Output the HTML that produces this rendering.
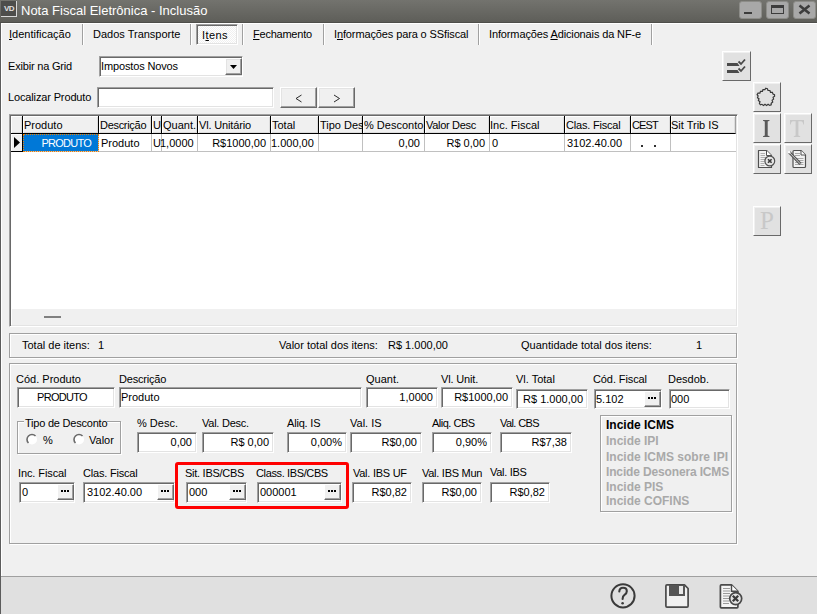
<!DOCTYPE html>
<html><head><meta charset="utf-8">
<style>
*{margin:0;padding:0;box-sizing:border-box}
html,body{width:817px;height:614px;overflow:hidden;background:#f0f0f0;font-family:"Liberation Sans",sans-serif;font-size:11px;color:#000}
.a{position:absolute}
.t{position:absolute;white-space:nowrap;line-height:13px}
.ed{position:absolute;background:#fff;border-top:1px solid #a0a0a0;border-left:1px solid #a0a0a0;border-right:1px solid #fff;border-bottom:1px solid #fff;box-shadow:inset 1px 1px 0 #696969,inset -1px -1px 0 #e3e3e3;white-space:nowrap;line-height:13px;padding:3px 4px 0 1px;overflow:hidden}
.r{text-align:right}
.btn{position:absolute;background:#f0f0f0;border-top:1px solid #fff;border-left:1px solid #fff;border-right:1px solid #696969;border-bottom:1px solid #696969;box-shadow:inset -1px -1px 0 #a0a0a0,inset 1px 1px 0 #e3e3e3}
.ell{position:absolute;background:#f0f0f0;border-top:1px solid #fff;border-left:1px solid #fff;border-right:1px solid #696969;border-bottom:1px solid #696969;box-shadow:inset -1px -1px 0 #a0a0a0}
.ell:after{content:"";position:absolute;left:3px;top:5px;width:2px;height:2px;background:#000;box-shadow:3px 0 #000,6px 0 #000}
.etch{position:absolute;border:1px solid #a0a0a0;box-shadow:inset 1px 1px 0 #fff,1px 1px 0 #fff}
.sep{position:absolute;top:24px;width:2px;height:21px;border-left:1px solid #a0a0a0;border-right:1px solid #fff}
.hd{position:absolute;top:116px;height:18px;background:#f0f0f0;border-right:1px solid #000;border-bottom:1px solid #000;box-shadow:inset 1px 1px 0 #fff,inset -1px -1px 0 #dcdcdc;white-space:nowrap;overflow:hidden;line-height:19px;padding-left:1px}
.cl{position:absolute;top:134px;height:18px;border-right:1px solid #c0c0c0;border-bottom:1px solid #c0c0c0;white-space:nowrap;overflow:hidden;line-height:19px;padding:0 2px}
.sb{position:absolute;background:#e1e1e1;border-top:1px solid #fff;border-left:1px solid #fff;border-right:1px solid #696969;border-bottom:1px solid #696969;box-shadow:inset 1px 1px 0 #f0f0f0}
.inc{position:absolute;left:606px;font-weight:bold;font-size:12px;color:#a9a9a9;white-space:nowrap;line-height:15px}
</style></head><body>
<!-- title bar -->
<div class="a" style="left:0;top:0;width:817px;height:23px;background:linear-gradient(#73736e,#5e5e59 95.6%,#4e4e4a 95.6%)"></div>
<div class="a" style="left:1px;top:1px;width:16px;height:16px;background:#4d4d4b;border-right:1px solid #d8d8d8;border-bottom:1px solid #d8d8d8"></div>
<div class="t" style="left:4px;top:2px;font-size:8px;font-weight:bold;color:#e0e0e0;letter-spacing:-0.6px">VD</div>
<div class="t" style="left:21px;top:3px;font-size:13px;line-height:15px;color:#fff">Nota Fiscal Eletrônica - Inclusão</div>
<div class="a" style="left:739px;top:1px;width:23px;height:18px;background:#a8a8a8;border:1px solid #8c8c88;border-radius:3px"></div>
<div class="a" style="left:744px;top:12px;width:8px;height:2px;background:#3c3c3c"></div>
<div class="a" style="left:766px;top:1px;width:23px;height:18px;background:#a8a8a8;border:1px solid #8c8c88;border-radius:3px"></div>
<div class="a" style="left:771px;top:5px;width:13px;height:9px;border:1px solid #3c3c3c;border-top-width:3px"></div>
<div class="a" style="left:793px;top:1px;width:23px;height:18px;background:#a8a8a8;border:1px solid #8c8c88;border-radius:3px"></div>
<svg class="a" style="left:798px;top:4px" width="13" height="11"><path d="M1.5 1.5L11.5 9.5M11.5 1.5L1.5 9.5" stroke="#3c3c3c" stroke-width="2.6"/></svg>
<!-- window border -->
<div class="a" style="left:0;top:23px;width:1px;height:591px;background:#5c5c5c"></div>
<div class="a" style="left:1px;top:23px;width:816px;height:1px;background:#fff"></div>
<div class="a" style="left:1px;top:23px;width:1px;height:553px;background:#fff"></div>

<!-- tabs -->
<div class="t" style="left:9px;top:28px"><u>I</u>dentificação</div>
<div class="sep" style="left:82px"></div>
<div class="t" style="left:93px;top:28px">Dados Transporte</div>
<div class="sep" style="left:190px"></div>
<div class="a" style="left:196px;top:24px;width:42px;height:21px;border-top:1px solid #a0a0a0;border-left:1px solid #a0a0a0;border-right:1px solid #fff;border-bottom:1px solid #fff;box-shadow:inset 1px 1px 0 #696969,inset -1px -1px 0 #e3e3e3;background:repeating-conic-gradient(#fff 0 25%,#f0f0f0 0 50%) 0 0/2px 2px"></div>
<div class="t" style="left:202px;top:29px;letter-spacing:0.4px">I<u>t</u>ens</div>
<div class="sep" style="left:242px"></div>
<div class="t" style="left:253px;top:28px;letter-spacing:-0.23px"><u>F</u>echamento</div>
<div class="sep" style="left:323px"></div>
<div class="t" style="left:334px;top:28px;letter-spacing:-0.12px">I<u>n</u>formações para o SSfiscal</div>
<div class="sep" style="left:478px"></div>
<div class="t" style="left:489px;top:28px;letter-spacing:-0.13px">Informações <u>A</u>dicionais da NF-e</div>
<div class="sep" style="left:651px"></div>

<!-- exibir / localizar -->
<div class="t" style="left:8px;top:60px;letter-spacing:-0.19px">Exibir na Grid</div>
<div class="ed" style="left:99px;top:56px;width:144px;height:21px;letter-spacing:-0.14px">Impostos Novos</div>
<div class="btn" style="left:225px;top:58px;width:17px;height:17px"></div>
<svg class="a" style="left:230px;top:65px" width="8" height="5"><path d="M0 0H7L3.5 4Z" fill="#000"/></svg>
<div class="t" style="left:8px;top:91px;letter-spacing:-0.14px">Localizar Produto</div>
<div class="ed" style="left:97px;top:87px;width:177px;height:21px"></div>
<div class="btn" style="left:280px;top:87px;width:37px;height:21px"></div>
<svg class="a" style="left:295px;top:94px" width="8" height="9"><path d="M6.5 1L1 4.5L6.5 8" stroke="#202020" stroke-width="0.95" fill="none"/></svg>
<div class="btn" style="left:318px;top:87px;width:37px;height:21px"></div>
<svg class="a" style="left:333px;top:94px" width="8" height="9"><path d="M1 1L6.5 4.5L1 8" stroke="#202020" stroke-width="0.95" fill="none"/></svg>

<!-- grid -->
<div class="a" style="left:9px;top:114px;width:729px;height:213px;border-top:1px solid #a0a0a0;border-left:1px solid #a0a0a0;border-right:1px solid #fff;border-bottom:1px solid #fff;box-shadow:inset 1px 1px 0 #696969,inset -1px -1px 0 #e3e3e3;background:#fff"></div>
<div class="a" style="left:11px;top:309px;width:725px;height:16px;background:#f0f0f0;border-left:1px solid #fff"></div>
<div class="a" style="left:44px;top:316px;width:17px;height:2px;background:#808080"></div>
<div class="hd" style="left:11px;width:12px"></div>
<div class="hd" style="left:23px;width:76px">Produto</div>
<div class="hd" style="left:99px;width:53px;letter-spacing:-0.3px">Descrição</div>
<div class="hd" style="left:152px;width:10px">U</div>
<div class="hd" style="left:162px;width:36px">Quant.</div>
<div class="hd" style="left:198px;width:73px;letter-spacing:-0.15px">Vl. Unitário</div>
<div class="hd" style="left:271px;width:48px">Total</div>
<div class="hd" style="left:319px;width:44px">Tipo Desc</div>
<div class="hd" style="left:363px;width:62px">% Desconto</div>
<div class="hd" style="left:425px;width:65px;letter-spacing:-0.3px">Valor Desc</div>
<div class="hd" style="left:490px;width:75px;padding-left:0">Inc. Fiscal</div>
<div class="hd" style="left:565px;width:66px;letter-spacing:-0.2px">Clas. Fiscal</div>
<div class="hd" style="left:631px;width:40px;letter-spacing:-0.9px">CEST</div>
<div class="hd" style="left:671px;width:65px;border-right-color:#a0a0a0;padding-left:0">Sit Trib IS</div>
<!-- row -->
<div class="a" style="left:11px;top:134px;width:12px;height:18px;background:#f0f0f0;border-right:1px solid #000;border-bottom:1px solid #000;box-shadow:inset 1px 1px 0 #fff"></div>
<svg class="a" style="left:14px;top:137px" width="6" height="11"><path d="M0 0L6 5.5L0 11Z" fill="#000"/></svg>
<div class="cl" style="left:23px;width:76px;background:#0078d7;color:#fff;text-align:right;outline:1px dotted #f08000;outline-offset:-1px;letter-spacing:-0.75px;padding-right:7px">PRODUTO</div>
<div class="cl" style="left:99px;width:53px">Produto</div>
<div class="cl" style="left:152px;width:10px;padding:0 1px">U</div>
<div class="cl" style="left:162px;width:36px"></div><div class="t" style="left:160px;top:137px">1,0000</div>
<div class="cl r" style="left:198px;width:73px;padding-right:4px">R$1000,00</div>
<div class="cl" style="left:271px;width:48px;padding-left:0">1.000,00</div>
<div class="cl" style="left:319px;width:44px"></div>
<div class="cl r" style="left:363px;width:62px;padding-right:4px">0,00</div>
<div class="cl r" style="left:425px;width:65px;padding-right:4px">R$ 0,00</div>
<div class="cl" style="left:490px;width:75px">0</div>
<div class="cl" style="left:565px;width:66px">3102.40.00</div>
<div class="cl" style="left:631px;width:40px"></div><div class="a" style="left:641px;top:145px;width:2px;height:2px;background:#303030"></div><div class="a" style="left:654px;top:145px;width:2px;height:2px;background:#303030"></div>
<div class="cl" style="left:671px;width:65px;border-right:0"></div>

<!-- side buttons -->
<div class="sb" style="left:722px;top:51px;width:29px;height:30px"></div>
<svg class="a" style="left:722px;top:51px" width="29" height="30"><path d="M5 12H15.5L17.5 15H5Z M5 19H15.5L17.5 22H5Z" fill="#4a4a4a"/><path d="M16.5 10.5L19 13L23 8.5M16.5 17.5L19 20L23 15.5" stroke="#4a4a4a" stroke-width="1.8" fill="none"/></svg>
<div class="sb" style="left:753px;top:82px;width:28px;height:30px"></div>
<svg class="a" style="left:753px;top:82px" width="28" height="30"><path d="M12.8 6.2 L14.4 6.7 L15.0 8.5 L16.9 8.5 L17.5 10.3 L19.4 10.3 L20.0 12.1 L21.5 12.6 L21.6 14.2 L20.1 15.3 L20.6 17.1 L19.1 18.3 L19.7 20.1 L18.2 21.2 L18.2 22.8 L16.7 23.4 L15.1 22.3 L13.6 23.4 L12.0 22.3 L10.5 23.4 L8.9 22.3 L7.4 22.8 L6.4 21.5 L7.0 19.7 L5.4 18.6 L6.0 16.8 L4.5 15.7 L5.1 13.9 L4.1 12.6 L5.0 11.2 L6.9 11.2 L7.5 9.4 L9.4 9.4 L10.0 7.6 L11.9 7.6Z" stroke="#383838" stroke-width="1.2" fill="none" stroke-linejoin="miter"/></svg>
<div class="sb" style="left:753px;top:113px;width:28px;height:30px"></div>
<svg class="a" style="left:753px;top:113px" width="28" height="30"><path d="M10 7H16.5V7.8L14.7 8.4V22.6L16.5 23.2V24H10V23.2L11.8 22.6V8.4L10 7.8Z" fill="#5a5a5a"/></svg>
<div class="sb" style="left:784px;top:113px;width:28px;height:30px"></div>
<svg class="a" style="left:784px;top:113px" width="28" height="30"><path d="M6 7H20V11.5H19.3Q18.8 8.3 17 8.3H14.4V22.6L16.2 23.2V24H9.8V23.2L11.6 22.6V8.3H9Q7.2 8.3 6.7 11.5H6Z" fill="#c8c8c8"/></svg>
<div class="sb" style="left:753px;top:144px;width:28px;height:30px"></div>
<svg class="a" style="left:753px;top:144px" width="28" height="30"><path d="M5.5 6.5H13.5L18.5 11.5V23.5H5.5Z" fill="#f2f2f2" stroke="#505050" stroke-width="1.2" stroke-linejoin="round"/><path d="M13.5 6.5V11.5H18.5" fill="#fff" stroke="#505050" stroke-width="1"/><path d="M7.5 9.5H12M7.5 11.5H12M7.5 13.5H13M7.5 15.5H12M7.5 17.5H11.5M7.5 19.5H11.5M7.5 21.5H11.5" stroke="#b0b0b0" stroke-width="1"/><circle cx="16.8" cy="17" r="4.9" fill="#e6e6e6" stroke="#505050" stroke-width="1.2"/><path d="M15 15.2L18.6 18.8M18.6 15.2L15 18.8" stroke="#3a3a3a" stroke-width="1.6"/></svg>
<div class="sb" style="left:784px;top:144px;width:28px;height:30px"></div>
<svg class="a" style="left:784px;top:144px" width="28" height="30"><path d="M10 6.5H17L21.5 11V22.5Q21.5 23.5 20.5 23.5H10Q9 23.5 9 22.5V7.5Q9 6.5 10 6.5Z" fill="#f2f2f2" stroke="#505050" stroke-width="1.2" stroke-linejoin="round"/><path d="M17 6.5V11H21.5" fill="#fff" stroke="#505050" stroke-width="1"/><path d="M11 9.5H16M11 11.5H16M11 14.5H19.5M11 16.5H19.5M11 18.5H19.5M11 20.5H19.5" stroke="#a8a8a8" stroke-width="1"/><path d="M5 8L16.5 20" stroke="#555" stroke-width="3"/><path d="M5 8L16.5 20" stroke="#c8c8c8" stroke-width="1"/><circle cx="5.2" cy="8.2" r="1.2" fill="#fff"/></svg>
<div class="sb" style="left:753px;top:206px;width:28px;height:30px"></div>
<div class="t" style="left:760px;top:207px;font-family:'Liberation Serif',serif;font-size:25px;line-height:28px;color:#c8c8c8">P</div>

<!-- totals panel -->
<div class="etch" style="left:9px;top:333px;width:728px;height:25px"></div>
<div class="t" style="left:22px;top:339px">Total de itens:</div>
<div class="t" style="left:98px;top:339px">1</div>
<div class="t" style="left:279px;top:339px">Valor total dos itens:</div>
<div class="t" style="left:388px;top:339px">R$ 1.000,00</div>
<div class="t" style="left:521px;top:339px">Quantidade total dos itens:</div>
<div class="t" style="left:696px;top:339px">1</div>

<!-- detail panel -->
<div class="etch" style="left:9px;top:363px;width:728px;height:181px"></div>
<div class="t" style="left:16px;top:373px">Cód. Produto</div>
<div class="ed" style="left:17px;top:387px;width:98px;height:21px;padding-left:19px;letter-spacing:-0.7px">PRODUTO</div>
<div class="t" style="left:119px;top:373px;letter-spacing:-0.2px">Descrição</div>
<div class="ed" style="left:119px;top:387px;width:243px;height:21px">Produto</div>
<div class="t" style="left:366px;top:373px">Quant.</div>
<div class="ed r" style="left:366px;top:387px;width:72px;height:21px">1,0000</div>
<div class="t" style="left:441px;top:373px;letter-spacing:-0.15px">Vl. Unit.</div>
<div class="ed r" style="left:441px;top:387px;width:72px;height:21px">R$1000,00</div>
<div class="t" style="left:516px;top:373px">Vl. Total</div>
<div class="ed r" style="left:516px;top:389px;width:72px;height:20px">R$ 1.000,00</div>
<div class="t" style="left:593px;top:373px;letter-spacing:-0.1px">Cód. Fiscal</div>
<div class="ed" style="left:594px;top:389px;width:68px;height:20px">5.102</div>
<div class="ell" style="left:644px;top:391px;width:17px;height:16px"></div>
<div class="t" style="left:668px;top:373px">Desdob.</div>
<div class="ed" style="left:669px;top:389px;width:61px;height:20px">000</div>

<!-- tipo desconto -->
<div class="etch" style="left:17px;top:421px;width:104px;height:33px"></div>
<div class="t" style="left:24px;top:417px;background:#f0f0f0;padding:0 0 0 1px;letter-spacing:-0.22px">Tipo de Desconto</div>
<svg class="a" style="left:26px;top:433px" width="13" height="13"><circle cx="6" cy="6.5" r="5" fill="#fff"/><path d="M2.46 10.04A5 5 0 0 1 9.54 2.96" stroke="#6a6a6a" stroke-width="1.6" fill="none"/></svg>
<div class="t" style="left:43px;top:434px">%</div>
<svg class="a" style="left:73px;top:433px" width="13" height="13"><circle cx="6" cy="6.5" r="5" fill="#fff"/><path d="M2.46 10.04A5 5 0 0 1 9.54 2.96" stroke="#6a6a6a" stroke-width="1.6" fill="none"/></svg>
<div class="t" style="left:89px;top:434px">Valor</div>
<div class="t" style="left:137px;top:417px">% Desc.</div>
<div class="ed r" style="left:137px;top:432px;width:60px;height:21px">0,00</div>
<div class="t" style="left:202px;top:417px;letter-spacing:-0.25px">Val. Desc.</div>
<div class="ed r" style="left:202px;top:432px;width:72px;height:21px">R$ 0,00</div>
<div class="t" style="left:287px;top:417px;letter-spacing:-0.19px">Aliq. IS</div>
<div class="ed r" style="left:287px;top:432px;width:60px;height:21px">0,00%</div>
<div class="t" style="left:350px;top:417px">Val. IS</div>
<div class="ed r" style="left:350px;top:432px;width:72px;height:21px">R$0,00</div>
<div class="t" style="left:432px;top:417px;letter-spacing:-0.5px">Aliq. CBS</div>
<div class="ed r" style="left:432px;top:432px;width:60px;height:21px">0,90%</div>
<div class="t" style="left:500px;top:417px;letter-spacing:-0.6px">Val. CBS</div>
<div class="ed r" style="left:500px;top:432px;width:72px;height:21px">R$7,38</div>

<!-- incide box -->
<div class="etch" style="left:600px;top:415px;width:132px;height:97px"></div>
<div class="inc" style="top:418px;color:#000">Incide ICMS</div>
<div class="inc" style="top:434px">Incide IPI</div>
<div class="inc" style="top:450px">Incide ICMS sobre IPI</div>
<div class="inc" style="top:465px;letter-spacing:-0.15px">Incide Desonera ICMS</div>
<div class="inc" style="top:480px">Incide PIS</div>
<div class="inc" style="top:494px">Incide COFINS</div>

<!-- row 3 -->
<div class="t" style="left:18px;top:467px;letter-spacing:-0.1px">Inc. Fiscal</div>
<div class="ed" style="left:19px;top:482px;width:56px;height:21px;padding-left:2px">0</div>
<div class="ell" style="left:57px;top:484px;width:17px;height:16px"></div>
<div class="t" style="left:83px;top:467px;letter-spacing:-0.2px">Clas. Fiscal</div>
<div class="ed" style="left:83px;top:482px;width:92px;height:21px;padding-left:3px">3102.40.00</div>
<div class="ell" style="left:157px;top:484px;width:17px;height:16px"></div>
<div class="t" style="left:185px;top:467px;letter-spacing:-0.27px">Sit. IBS/CBS</div>
<div class="ed" style="left:186px;top:482px;width:61px;height:21px;padding-left:2px">000</div>
<div class="ell" style="left:229px;top:484px;width:17px;height:16px"></div>
<div class="t" style="left:256px;top:467px;letter-spacing:-0.37px">Class. IBS/CBS</div>
<div class="ed" style="left:257px;top:482px;width:85px;height:21px;padding-left:2px">000001</div>
<div class="ell" style="left:324px;top:484px;width:17px;height:16px"></div>
<div class="a" style="left:175px;top:462px;width:174px;height:47px;border:3px solid #ff0000;border-radius:3px"></div>
<div class="t" style="left:353px;top:467px;letter-spacing:-0.26px">Val. IBS UF</div>
<div class="ed r" style="left:352px;top:482px;width:60px;height:21px">R$0,82</div>
<div class="t" style="left:422px;top:467px;letter-spacing:-0.27px">Val. IBS Mun</div>
<div class="ed r" style="left:422px;top:482px;width:60px;height:21px">R$0,00</div>
<div class="t" style="left:490px;top:466px;letter-spacing:-0.29px">Val. IBS</div>
<div class="ed r" style="left:490px;top:482px;width:60px;height:21px">R$0,82</div>

<!-- bottom bar -->
<div class="a" style="left:1px;top:576px;width:816px;height:38px;background:#e0e0e0;border-top:1px solid #a0a0a0"></div>
<svg class="a" style="left:600px;top:576px" width="160" height="38"><circle cx="23" cy="19.8" r="11.6" fill="none" stroke="#3a3a3a" stroke-width="2"/><path d="M19.3 15.5Q19.5 11.8 23 11.8Q26.8 11.8 26.8 15.2Q26.8 17.3 24.5 18.8Q22.6 20 22.6 23" fill="none" stroke="#3a3a3a" stroke-width="2.1" stroke-linecap="round"/><circle cx="22.6" cy="27.2" r="1.3" fill="#3a3a3a"/>
<path d="M67 8.9H84.5L88.1 12.5V30Q88.1 31.1 87 31.1H67Q65.9 31.1 65.9 30V10Q65.9 8.9 67 8.9Z" fill="#f0f0f0" stroke="#4a4a4a" stroke-width="1.7" stroke-linejoin="round"/><rect x="69" y="9" width="16" height="11" fill="#555"/><rect x="79" y="10" width="4" height="8" fill="#e8e8e8"/>
<path d="M121.3 8.9H131.5L137.9 15.3V31Q137.9 31.9 137 31.9H121.3Q120.4 31.9 120.4 31V9.8Q120.4 8.9 121.3 8.9Z" fill="#f4f4f4" stroke="#4a4a4a" stroke-width="1.7" stroke-linejoin="round"/><path d="M131.5 8.9V15.3H137.9" fill="#fff" stroke="#4a4a4a" stroke-width="1.4"/><path d="M123 12.5H130M123 15H130M123 17.5H130M123 20H129M123 22.5H129M123 25H129M123 27.5H129" stroke="#9a9a9a" stroke-width="1.2"/><circle cx="135.7" cy="22.6" r="6" fill="#e4e4e4" stroke="#4a4a4a" stroke-width="1.7"/><path d="M132.8 19.8L138.2 25.2M138.2 19.8L132.8 25.2" stroke="#3a3a3a" stroke-width="2.3"/></svg>
</body></html>
